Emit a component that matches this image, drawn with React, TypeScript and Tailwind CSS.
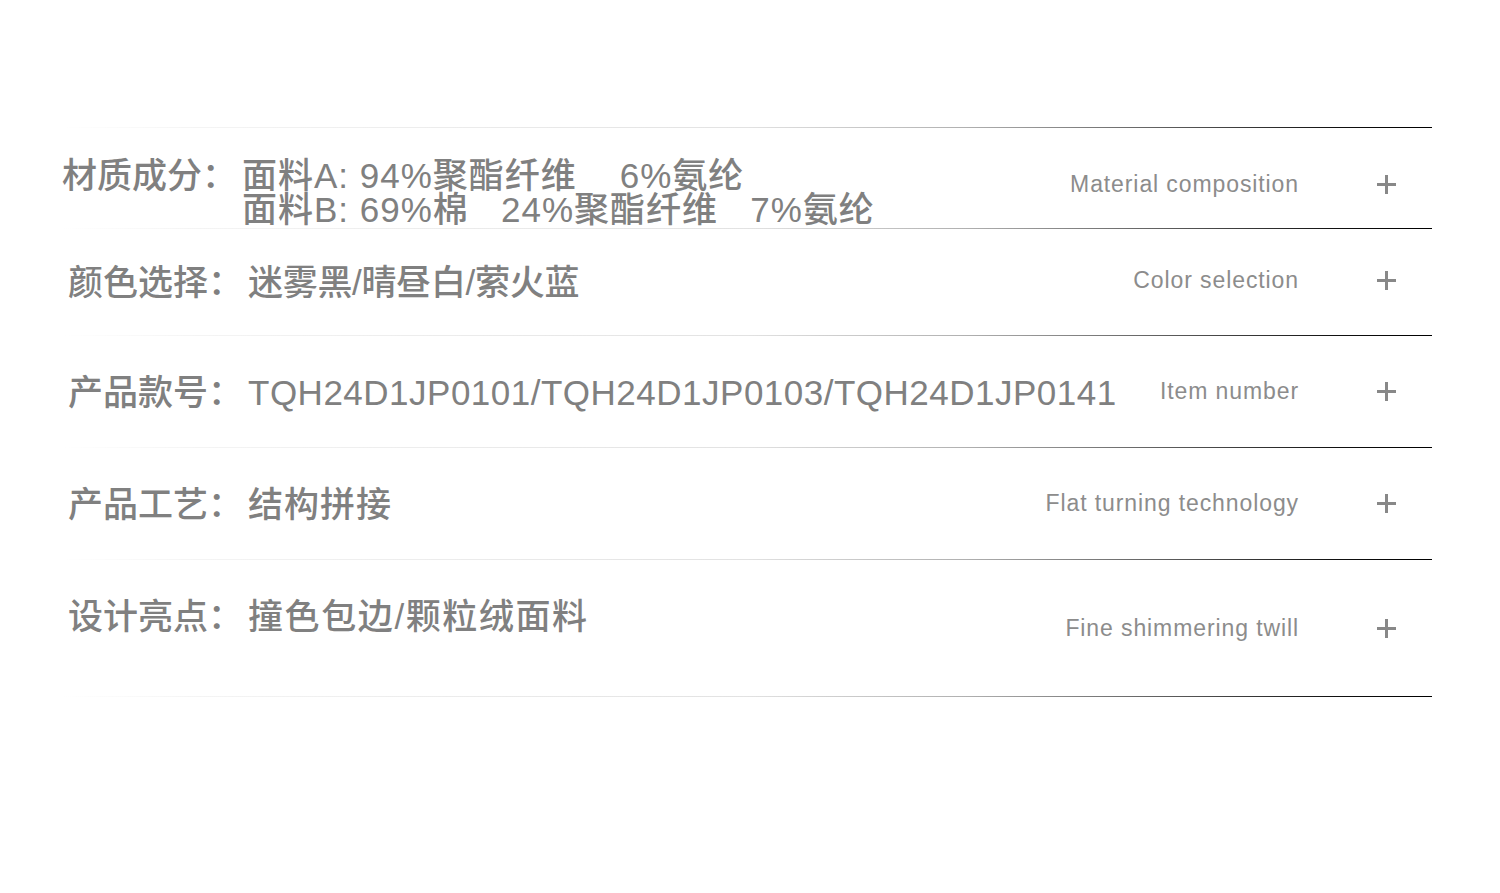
import React from "react";

const zh = { fontFamily: '"Liberation Sans", "Noto Sans CJK SC", sans-serif' };

function Line() {
  return (
    <div className="h-px w-full bg-[linear-gradient(to_right,#ffffff_0%,#f4f4f4_10%,#e2e2e2_50%,#b0b0b0_66%,#555555_82%,#111111_93%,#000000_100%)]" />
  );
}

function Plus() {
  return (
    <div className="relative h-[19px] w-[19px] shrink-0">
      <div className="absolute left-0 top-[8px] h-[3px] w-[19px] bg-[#888888]" />
      <div className="absolute left-[8px] top-0 h-[19px] w-[3px] bg-[#888888]" />
    </div>
  );
}

function Right({ en, className = "" }: { en: string; className?: string }) {
  return (
    <div className={"ml-auto flex shrink-0 items-center " + className}>
      <span className="whitespace-nowrap text-[23px] font-normal tracking-[0.9px] text-[#8c8c8c]">{en}</span>
      <div className="ml-[78px] mr-[36px]">
        <Plus />
      </div>
    </div>
  );
}

export default function App() {
  return (
    <div className="h-[893px] w-[1500px] bg-white" style={zh}>
      <div className="ml-[62px] w-[1370px] pt-[127px]">
        {/* Row 1 */}
        <Line />
        <div className="flex h-[100px] items-start">
          <div className="flex pt-[31px] text-[35px] font-medium leading-[34px] text-[#808080]">
            <span className="w-[175px] shrink-0">材质成分：</span>
            <div className="ml-[5px] whitespace-pre tracking-[1px]">
              <div>面料A: 94%聚酯纤维    6%氨纶</div>
              <div>面料B: 69%棉   24%聚酯纤维   7%氨纶</div>
            </div>
          </div>
          <Right en="Material composition" className="mt-[39px]" />
        </div>
        {/* Row 2 */}
        <Line />
        <div className="flex h-[106px] items-center pl-[6px]">
          <div className="mt-[3px] flex text-[35px] font-medium text-[#808080]">
            <span className="w-[175px] shrink-0">颜色选择：</span>
            <span className="ml-[5px] whitespace-nowrap tracking-[-0.3px]">迷雾黑/晴昼白/萦火蓝</span>
          </div>
          <Right en="Color selection" className="-mt-[3px]" />
        </div>
        {/* Row 3 */}
        <Line />
        <div className="flex h-[111px] items-center pl-[6px]">
          <div className="mt-[4px] flex text-[35px] font-medium text-[#808080]">
            <span className="w-[175px] shrink-0">产品款号：</span>
            <span className="ml-[5px] whitespace-nowrap tracking-[0.5px]">TQH24D1JP0101/TQH24D1JP0103/TQH24D1JP0141</span>
          </div>
          <Right en="Item number" />
        </div>
        {/* Row 4 */}
        <Line />
        <div className="flex h-[111px] items-center pl-[6px]">
          <div className="mt-[3px] flex text-[35px] font-medium text-[#808080]">
            <span className="w-[175px] shrink-0">产品工艺：</span>
            <span className="ml-[5px] whitespace-nowrap tracking-[1px]">结构拼接</span>
          </div>
          <Right en="Flat turning technology" />
        </div>
        {/* Row 5 */}
        <Line />
        <div className="flex h-[136px] items-center pl-[6px]">
          <div className="-mt-[22px] flex text-[35px] font-medium text-[#808080]">
            <span className="w-[175px] shrink-0">设计亮点：</span>
            <span className="ml-[5px] whitespace-nowrap tracking-[1.6px]">撞色包边/颗粒绒面料</span>
          </div>
          <Right en="Fine shimmering twill" />
        </div>
        <Line />
      </div>
    </div>
  );
}
